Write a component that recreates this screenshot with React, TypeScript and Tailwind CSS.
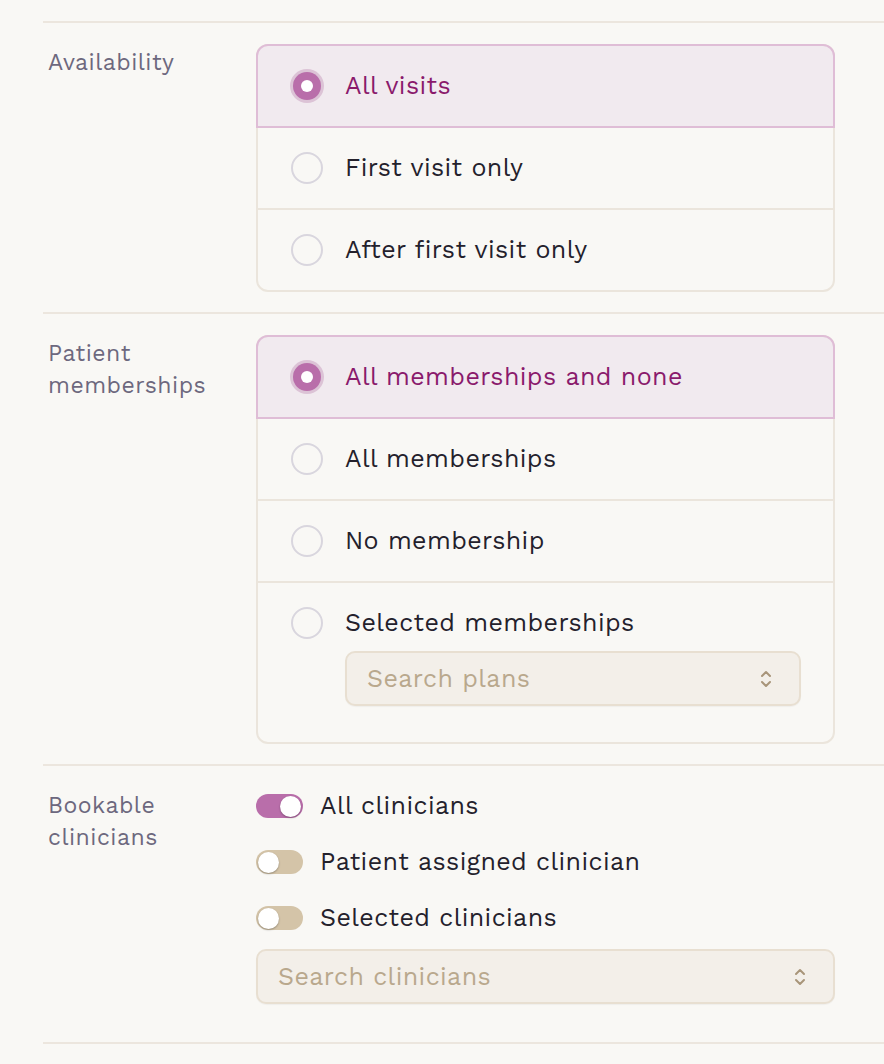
import React from "react";

const font = { fontFamily: '"Work Sans", Inter, "Noto Sans", sans-serif' };

function Radio({ checked }: { checked: boolean }) {
  if (checked) {
    return (
      <span className="flex h-[34px] w-[34px] shrink-0 items-center justify-center rounded-full bg-[#dcc3d6]">
        <span className="flex h-[28px] w-[28px] items-center justify-center rounded-full bg-[#b96eaa]">
          <span className="h-[12px] w-[12px] rounded-full bg-white" />
        </span>
      </span>
    );
  }
  return (
    <span className="flex h-[34px] w-[34px] shrink-0 items-center justify-center">
      <span className="h-[32px] w-[32px] rounded-full border-2 border-[#d9d6de] bg-[#f9f8f5]" />
    </span>
  );
}

function Chevrons() {
  return (
    <svg width="14" height="22" viewBox="0 0 14 22" fill="none" stroke="#a8957a" strokeWidth="2" strokeLinecap="round" strokeLinejoin="round">
      <path d="M3 8 L7 4 L11 8" />
      <path d="M3 14 L7 18 L11 14" />
    </svg>
  );
}

function SearchBox({ placeholder }: { placeholder: string }) {
  return (
    <div className="flex h-[55px] items-center justify-between rounded-[10px] border-2 border-[#e8dfd1] bg-[#f3efe9] pl-[20px] pr-[26px] shadow-[0_1px_1px_rgba(0,0,0,0.04)]">
      <span className="text-[25px] tracking-[0.4px] text-[#b9a88d]">{placeholder}</span>
      <Chevrons />
    </div>
  );
}

type Opt = { label: string; extra?: React.ReactNode };

function RadioCard({ options }: { options: Opt[] }) {
  return (
    <div className="w-[579px] rounded-[12px] border-2 border-[#ebe5dc]">
      {options.map((o, i) => {
        const sel = i === 0;
        if (sel) {
          return (
            <div
              key={o.label}
              className="-mx-[2px] -mt-[2px] flex h-[84px] items-center rounded-t-[12px] border-2 border-[#dfbdd6] bg-[#f1eaef] pl-[32px]"
            >
              <Radio checked />
              <span className="ml-[21px] text-[25px] tracking-[0.4px] text-[#8a1a6c]">{o.label}</span>
            </div>
          );
        }
        const last = i === options.length - 1;
        return (
          <div key={o.label} className={last ? "" : "border-b-2 border-[#ebe5dc]"}>
            <div className={o.extra ? "pb-[36px] pt-[23px]" : "flex h-[80px] items-center"}>
              <div className="flex items-center pl-[32px]">
                <Radio checked={false} />
                <span className="ml-[21px] text-[25px] leading-[32px] tracking-[0.4px] text-[#24212c]">{o.label}</span>
              </div>
              {o.extra ? <div className="ml-[87px] mr-[32px] mt-[11px]">{o.extra}</div> : null}
            </div>
          </div>
        );
      })}
    </div>
  );
}

function Toggle({ on }: { on: boolean }) {
  return (
    <span
      className={
        "flex h-[24px] w-[47px] shrink-0 items-center rounded-full px-[2px] " +
        (on ? "justify-end bg-[#b96eaa]" : "justify-start bg-[#d4c4a8]")
      }
    >
      <span className="h-[21px] w-[21px] rounded-full bg-white shadow-[0_1px_2px_rgba(0,0,0,0.3)]" />
    </span>
  );
}

function Section({ label, children, pb = "pb-[20px]" }: { label: React.ReactNode; children: React.ReactNode; pb?: string }) {
  return (
    <div className={"flex border-b-2 border-[#ece6de] pt-[21px] " + pb}>
      <div className="w-[213px] shrink-0 pl-[5px] pt-[3px] text-[23px] leading-[32px] tracking-[0.5px] text-[#6d687e]">
        {label}
      </div>
      <div>{children}</div>
    </div>
  );
}

export default function App() {
  return (
    <div className="min-h-[1064px] bg-[#f9f8f5] pt-[21px]" style={font}>
      <div className="ml-[43px] border-t-2 border-[#ece6de]">
        <Section label="Availability">
          <RadioCard options={[{ label: "All visits" }, { label: "First visit only" }, { label: "After first visit only" }]} />
        </Section>
        <Section label={<>Patient<br />memberships</>}>
          <RadioCard
            options={[
              { label: "All memberships and none" },
              { label: "All memberships" },
              { label: "No membership" },
              { label: "Selected memberships", extra: <SearchBox placeholder="Search plans" /> },
            ]}
          />
        </Section>
        <Section label={<>Bookable<br />clinicians</>} pb="pb-[38px]">
          <div className="w-[579px] pt-[3px]">
            <div className="flex flex-col gap-[24px]">
              {[
                { t: "All clinicians", on: true },
                { t: "Patient assigned clinician", on: false },
                { t: "Selected clinicians", on: false },
              ].map((r) => (
                <div key={r.t} className="flex h-[32px] items-center">
                  <Toggle on={r.on} />
                  <span className="ml-[17px] text-[25px] tracking-[0.4px] text-[#24212c]">{r.t}</span>
                </div>
              ))}
            </div>
            <div className="mt-[15px]">
              <SearchBox placeholder="Search clinicians" />
            </div>
          </div>
        </Section>
      </div>
    </div>
  );
}
